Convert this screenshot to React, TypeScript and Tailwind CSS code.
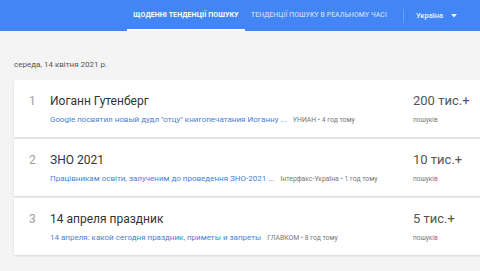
import React from 'react';

const trends = [
  {
    n: 1,
    title: 'Иоганн Гутенберг',
    article: 'Google посвятил новый дудл "отцу" книгопечатания Иоганну ...',
    source: 'УНИАН • 4 год тому',
    count: '200 тис.+',
  },
  {
    n: 2,
    title: 'ЗНО 2021',
    article: 'Працівникам освіти, залученим до проведення ЗНО-2021 ...',
    source: 'Інтерфакс-Україна • 1 год тому',
    count: '10 тис.+',
  },
  {
    n: 3,
    title: '14 апреля праздник',
    article: '14 апреля: какой сегодня праздник, приметы и запреты',
    source: 'ГЛАВКОМ • 8 год тому',
    count: '5 тис.+',
  },
];

export default function App() {
  return (
    <div
      className="w-[480px] h-[271px] overflow-hidden bg-[#f4f4f4]"
      style={{ fontFamily: 'Roboto, "Noto Sans", sans-serif' }}
    >
      {/* Header */}
      <div className="h-[31px] bg-[#4285f4] flex items-stretch pl-[127px] text-white">
        <div className="w-[118px] flex items-center justify-center border-b-[2px] border-white text-[7px] font-bold tracking-[0.1px] pt-[2px]">
          ЩОДЕННІ ТЕНДЕНЦІЇ ПОШУКУ
        </div>
        <div className="ml-[6px] flex items-center text-[6.8px] font-medium text-white/70 tracking-[0.1px]">
          ТЕНДЕНЦІЇ ПОШУКУ В РЕАЛЬНОМУ ЧАСІ
        </div>
        <div className="ml-[16px] self-center w-px h-[14px] bg-white/20" />
        <div className="ml-[12px] flex items-center text-[7.5px] font-medium text-white/90">
          Україна
          <svg className="ml-[8px]" width="6" height="4" viewBox="0 0 6 4">
            <path d="M0 0 L6 0 L3 3.5 Z" fill="rgba(255,255,255,0.9)" />
          </svg>
        </div>
      </div>

      {/* Body */}
      <div className="pl-[14px]">
        <div className="mt-[29px] text-[8px] leading-[10px] text-[#555]">середа, 14 квітня 2021 р.</div>
        <div className="mt-[10px] flex flex-col gap-[2px]">
          {trends.map((t) => (
            <div
              key={t.n}
              className="h-[57px] bg-white shadow-[0_1px_2px_rgba(0,0,0,0.12)] flex items-start pt-[14px]"
            >
              <div className="w-[36px] pl-[15px] text-[12px] leading-[14px] text-[#9e9e9e]">{t.n}</div>
              <div className="flex-1 min-w-0">
                <div className="text-[12px] leading-[14px] text-[#333]">{t.title}</div>
                <div className="mt-[7px] flex items-center leading-[10px] whitespace-nowrap">
                  <span className="text-[8px] text-[#4a7fd6]">{t.article}</span>
                  <span className="ml-[6px] text-[6.8px] text-[#777]">{t.source}</span>
                </div>
              </div>
              <div className="w-[67px] shrink-0">
                <div className="text-[13px] leading-[14px] text-[#555]">{t.count}</div>
                <div className="mt-[7px] text-[6.5px] leading-[10px] text-[#777]">пошуків</div>
              </div>
            </div>
          ))}
        </div>
      </div>
    </div>
  );
}
